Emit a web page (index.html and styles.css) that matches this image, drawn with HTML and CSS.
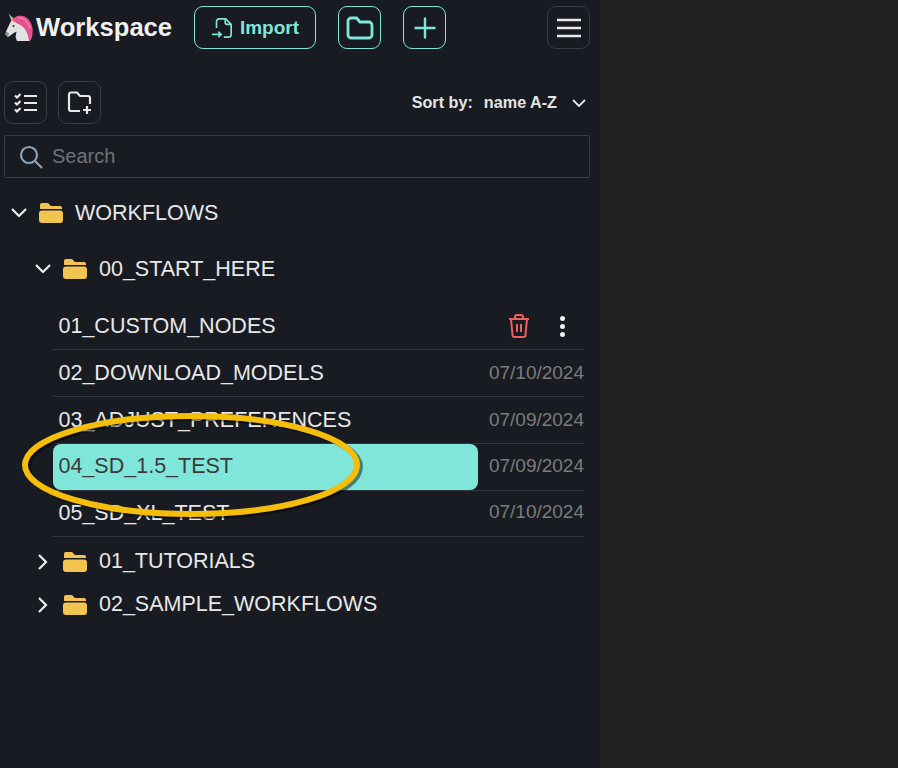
FILE: index.html
```html
<!DOCTYPE html>
<html lang="en">
<head>
    <meta charset="UTF-8">
    <title>Workspace</title>
    <link rel="stylesheet" href="styles.css">
</head>
<body>

<div class="sidebar">
    <div class="top-bar">
        <div class="brand">
            <svg class="unicorn" viewBox="0 0 28 29" width="28" height="29">
                <path d="M3.500 0.500 L10 6.500 L7 9.500Z" fill="#86a6cc"/>
                <path d="M6 4 L10 6.500 L7 9.500Z" fill="#e8b04a"/>
                <path d="M6 8 L14 7 L22 16 L25 28 L12 28 L10.500 24 L11.500 18.500 L8 20.500 L3 24 L0.500 21.500 L1 18.500Z" fill="#e2e2e2"/>
                <path d="M3 24 L0.500 21.500 L1 18.500 L4 20Z" fill="#8f8f8f"/>
                <path d="M7.500 8 C8 3 17 1 22 5 C26 8 28.500 15 27.500 20 C27.500 24 26.500 27 24 28.500 C23.500 23 22 18 18 14 C15 11.500 11 9.500 7.500 8Z" fill="#e6518f"/>
                <path d="M13 5 C18 4 23 8 25 15" fill="none" stroke="#f08ab5" stroke-width="1.200"/>
                <circle cx="8.500" cy="13" r="1.100" fill="#333333"/>
            </svg>
            <span class="brand-name">Workspace</span>
        </div>
        <button class="btn btn-accent btn-import">
            <svg viewBox="0 0 24 24" width="22" height="24" class="ico-stroke">
                <path d="M6 12V5a3 3 0 0 1 3-3h7l6 6v11a3 3 0 0 1-3 3h-5"/>
                <path d="M15.500 2v4a2 2 0 0 0 2 2h4.500"/>
                <path d="M1 19h10M8 16l3 3-3 3"/>
            </svg>
            Import
        </button>
        <button class="btn btn-accent btn-folder">
            <svg viewBox="0 0 28 24" width="28" height="24" class="ico-stroke">
                <path d="M2 5a3 3 0 0 1 3-3h5.500l3.500 4h9a3 3 0 0 1 3 3v10a3 3 0 0 1-3 3H5a3 3 0 0 1-3-3z"/>
            </svg>
        </button>
        <button class="btn btn-accent btn-plus">
            <svg viewBox="0 0 24 24" width="24" height="24" class="ico-stroke">
                <path d="M12 1.500v21M1.500 12h21"/>
            </svg>
        </button>
        <button class="btn btn-menu">
            <svg viewBox="0 0 26 20" width="26" height="20" class="ico-stroke">
                <path d="M1 2h24M1 10h24M1 18h24"/>
            </svg>
        </button>
    </div>

    <div class="tool-bar">
        <button class="btn">
            <svg viewBox="0 0 24 20" width="24" height="20" class="ico-thin">
                <path d="M1 2.500l2 2 3.500-3.500M1 9.500l2 2 3.500-3.500M1 16.500l2 2 3.500-3.500"/>
                <path d="M10 3h13M10 10h13M10 17h13"/>
            </svg>
        </button>
        <button class="btn btn-new-folder">
            <svg viewBox="0 0 26 24" width="26" height="24" class="ico-thin">
                <path d="M13 20H4a2 2 0 0 1-2-2V3.500a2 2 0 0 1 2-2h6l3 3.500h8a2 2 0 0 1 2 2v6"/>
                <path d="M20 15v8M16 19h8"/>
            </svg>
        </button>
        <div class="sort">
            <span class="sort-label">Sort by:</span>
            <span class="sort-value">name A-Z</span>
            <svg viewBox="0 0 14 8" width="14" height="8" class="chev-small"><path d="M1 1l6 6 6-6"/></svg>
        </div>
    </div>

    <div class="search">
        <svg viewBox="0 0 24 24" width="24" height="24" class="search-ico">
            <circle cx="10" cy="10" r="8"/>
            <path d="M16 16l7 7"/>
        </svg>
        <span class="search-text">Search</span>
    </div>

    <div class="tree">
        <div class="folder-row root">
            <svg viewBox="0 0 16 10" width="16" height="10" class="chev"><path d="M1 1l7 7 7-7"/></svg>
            <svg viewBox="0 0 24 20" width="24" height="20" class="folder-ico"><path d="M3 0h6l3 3h9a2 2 0 0 1 2 2v1H1V2a2 2 0 0 1 2-2z"/><rect y="7.500" width="24" height="12.500" rx="3"/></svg>
            <span>WORKFLOWS</span>
        </div>
        <div class="folder-row sub open">
            <svg viewBox="0 0 16 10" width="16" height="10" class="chev"><path d="M1 1l7 7 7-7"/></svg>
            <svg viewBox="0 0 24 20" width="24" height="20" class="folder-ico"><path d="M3 0h6l3 3h9a2 2 0 0 1 2 2v1H1V2a2 2 0 0 1 2-2z"/><rect y="7.500" width="24" height="12.500" rx="3"/></svg>
            <span>00_START_HERE</span>
        </div>

        <div class="files">
            <div class="file-row">
                <span class="file-name">01_CUSTOM_NODES</span>
                <svg viewBox="0 0 22 24" width="22" height="24" class="trash">
                    <path d="M1 5h20M7 5V3a2 2 0 0 1 2-2h4a2 2 0 0 1 2 2v2"/>
                    <path d="M3 5l1.500 16a2 2 0 0 0 2 2h9a2 2 0 0 0 2-2L19 5"/>
                    <path d="M9 10v8M13 10v8"/>
                </svg>
                <span class="dots"><i></i><i></i><i></i></span>
            </div>
            <div class="file-row">
                <span class="file-name">02_DOWNLOAD_MODELS</span>
                <span class="file-date">07/10/2024</span>
            </div>
            <div class="file-row">
                <span class="file-name">03_ADJUST_PREFERENCES</span>
                <span class="file-date">07/09/2024</span>
            </div>
            <div class="file-row">
                <span class="file-name selected">04_SD_1.5_TEST</span>
                <span class="file-date">07/09/2024</span>
            </div>
            <div class="file-row">
                <span class="file-name">05_SD_XL_TEST</span>
                <span class="file-date">07/10/2024</span>
            </div>
        </div>

        <div class="folder-row sub closed">
            <svg viewBox="0 0 10 16" width="10" height="16" class="chev"><path d="M1 1l7 7-7 7"/></svg>
            <svg viewBox="0 0 24 20" width="24" height="20" class="folder-ico"><path d="M3 0h6l3 3h9a2 2 0 0 1 2 2v1H1V2a2 2 0 0 1 2-2z"/><rect y="7.500" width="24" height="12.500" rx="3"/></svg>
            <span>01_TUTORIALS</span>
        </div>
        <div class="folder-row sub closed">
            <svg viewBox="0 0 10 16" width="10" height="16" class="chev"><path d="M1 1l7 7-7 7"/></svg>
            <svg viewBox="0 0 24 20" width="24" height="20" class="folder-ico"><path d="M3 0h6l3 3h9a2 2 0 0 1 2 2v1H1V2a2 2 0 0 1 2-2z"/><rect y="7.500" width="24" height="12.500" rx="3"/></svg>
            <span>02_SAMPLE_WORKFLOWS</span>
        </div>
    </div>
</div>

<div class="right-pane"></div>

<svg class="oval" viewBox="0 0 344 110" width="344" height="110">
    <ellipse class="oval-shadow" cx="173" cy="56" rx="166" ry="49"/>
    <ellipse class="oval-line" cx="170" cy="54" rx="166" ry="49"/>
</svg>

</body>
</html>
```

FILE: styles.css
```css
* { margin: 0; padding: 0; box-sizing: border-box; }
html, body { height: 100%; width: 100%; }
body {
    position: relative;
    display: flex;
    overflow: hidden;
    background: #222222;
    font-family: "Liberation Sans", Arial, sans-serif;
    color: #e8e8e8;
}
.sidebar {
    width: 600px;
    height: 100%;
    flex-shrink: 0;
    padding: 6px 10px 0 4px;
    background: #181b22;
}
.right-pane { flex: 1; background: #222222; }

/* buttons */
.btn {
    display: flex;
    justify-content: center;
    align-items: center;
    width: 43px;
    height: 43px;
    flex-shrink: 0;
    border: 1px solid #3a3d42;
    border-radius: 9px;
    background: transparent;
    color: #e8e8e8;
    font-family: inherit;
}
.btn-accent { border-color: #7fe6d9; color: #7fe6d9; }
.btn-import {
    width: 122px;
    gap: 7px;
    margin-left: 22px;
    font-size: 19px;
    font-weight: bold;
}
.btn-folder { margin-left: 22px; }
.btn-plus { margin-left: 22px; }
.btn-menu { margin-left: auto; }
.ico-stroke { fill: none; stroke: currentColor; stroke-width: 2.800; }
.btn-import .ico-stroke { stroke-width: 1.800; }
.btn-plus .ico-stroke, .btn-menu .ico-stroke { stroke-width: 2.400; }
.ico-thin { fill: none; stroke: currentColor; stroke-width: 2.200; }

/* top rows */
.top-bar { display: flex; align-items: center; }
.brand { display: flex; align-items: center; width: 168px; }
.unicorn { flex-shrink: 0; margin-left: 1px; margin-right: 3px; }
.brand-name { font-size: 25.600px; font-weight: bold; color: #f0f0f0; }
.tool-bar { display: flex; align-items: center; gap: 11px; margin-top: 32px; }
.sort { display: flex; align-items: center; margin-left: auto; margin-right: 4px; font-size: 16.200px; font-weight: bold; color: #e4e4e4; }
.sort-label { margin-right: 11px; }
.sort-value { margin-right: 15px; }
.chev-small { fill: none; stroke: #e8e8e8; stroke-width: 1.800; }

/* search */
.search {
    display: flex;
    align-items: center;
    height: 43px;
    margin-top: 11px;
    padding-left: 14px;
    border: 1px solid #3a3d42;
    border-radius: 2px;
}
.search-ico { fill: none; stroke: #8ba2bb; stroke-width: 2.200; margin-right: 9px; }
.search-text { font-size: 20px; color: #6f7276; }

/* tree */
.tree { margin-top: 12px; font-size: 21.500px; }
.folder-row { display: flex; align-items: center; height: 46px; color: #e8e8e8; }
.chev { fill: none; stroke: #f0f0f0; stroke-width: 2.200; flex-shrink: 0; }
.folder-ico { fill: #f2c550; flex-shrink: 0; margin-left: 12px; margin-right: 12px; }
.root { padding-left: 7px; margin-bottom: 10px; }
.sub { padding-left: 31px; }
.closed { height: 43px; }
.closed .chev { margin-left: 3px; margin-right: 3px; }
.files { margin: 11px 6px 3px 49px; }
.file-row {
    display: flex;
    align-items: center;
    justify-content: space-between;
    height: 47px;
    border-bottom: 1px solid #31363f;
    color: #e8e8e8;
}
.file-row:last-child { height: 46px; }
.file-row:nth-child(n+4) .file-date { margin-bottom: 3px; }
.file-name { padding-left: 5.500px; }
.selected {
    display: flex;
    align-items: center;
    width: 425px;
    height: 46px;
    padding-bottom: 1px;
    border-radius: 8px;
    background: #80e6da;
    color: #3a3a3a;
}
.file-date { font-size: 19px; color: #7b7b7b; }
.trash { fill: none; stroke: #f05f5f; stroke-width: 2; margin-left: auto; margin-right: 30px; }
.dots { display: flex; flex-direction: column; gap: 3px; margin-right: 19px; }
.dots i { display: block; width: 5px; height: 5px; border-radius: 50%; background: #f0f0f0; }

/* hand-drawn highlight over the list */
.oval { position: absolute; left: 21px; top: 411px; overflow: visible; }
.oval ellipse { fill: none; stroke-width: 6; }
.oval-line { stroke: #f5be0b; }
.oval-shadow { stroke: rgba(0, 0, 0, 0.45); }
```
